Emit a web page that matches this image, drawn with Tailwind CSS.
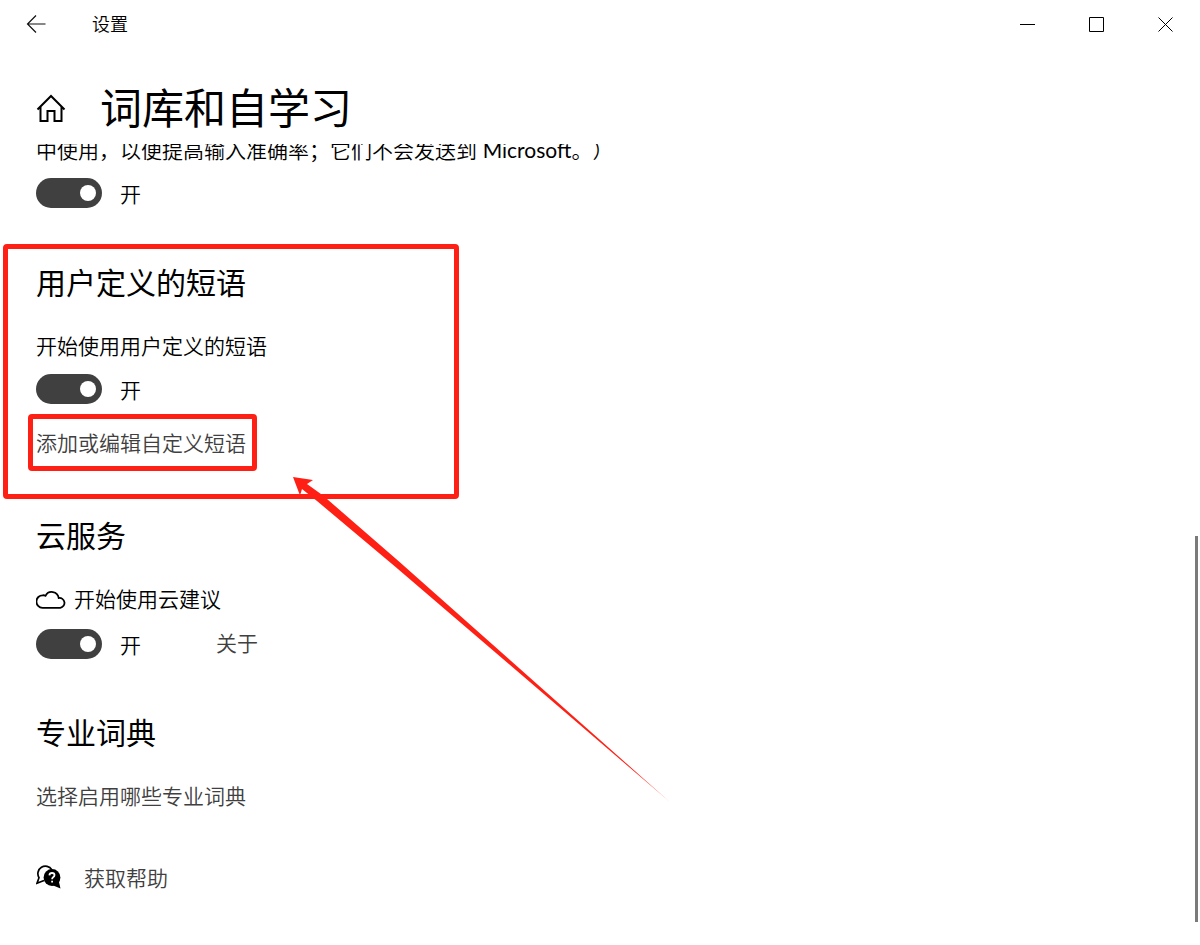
<!DOCTYPE html>
<html lang="zh-CN">
<head>
  <meta charset="UTF-8">
  <meta name="viewport" content="width=device-width, initial-scale=1.0">
  <title>设置</title>

  <!-- Tailwind CSS -->
  <script src="https://cdn.jsdelivr.net/npm/@tailwindcss/browser@4"></script>
</head>

<body class="h-screen flex flex-col overflow-hidden bg-white text-black font-[350] font-['Lato','Noto_Sans_CJK_SC',sans-serif] [text-spacing-trim:space-all]">

  <!-- Title bar -->
  <div class="flex items-center h-12 shrink-0">
    <button class="w-18 h-12 flex items-center justify-center" aria-label="返回">
      <svg class="w-5 h-5" viewBox="0 0 20 20" fill="none" stroke="#111" stroke-width="1.2">
        <path d="M10 1.5 L1.5 10 L10 18.5 M1.5 10 H19.5"/>
      </svg>
    </button>
    <span class="ml-5 text-lg leading-6">设置</span>
    <div class="ml-auto flex">
      <button class="w-[69px] h-12 flex items-center justify-center" aria-label="最小化">
        <svg class="w-4 h-4" viewBox="0 0 16 16" stroke="#000"><path d="M0 8.5 H15"/></svg>
      </button>
      <button class="w-[69px] h-12 flex items-center justify-center" aria-label="最大化">
        <svg class="w-4 h-4" viewBox="0 0 16 16" fill="none" stroke="#000"><path d="M0.5 1.5 H14.5 V15.5 H0.5 Z"/></svg>
      </button>
      <button class="w-[69px] h-12 flex items-center justify-center" aria-label="关闭">
        <svg class="w-4 h-4" viewBox="0 0 16 16" fill="none" stroke="#000"><path d="M0.5 1.5 L14.5 15.5 M14.5 1.5 L0.5 15.5"/></svg>
      </button>
    </div>
  </div>

  <!-- Page heading -->
  <header class="flex items-center h-24 shrink-0 pl-9 pt-6">
    <a href="#" class="w-16" aria-label="主页">
      <svg class="w-8 h-8" viewBox="0 0 32 32" fill="none" stroke="#000" stroke-width="2">
        <path d="M1.500 17.500 L15 4 L28.500 17.500 M4.500 15 V29 H11.500 V19 H18.500 V29 H25.500 V15"/>
      </svg>
    </a>
    <h1 class="text-[42px] leading-14 font-normal">词库和自学习</h1>
  </header>

  <!-- Scrolled content -->
  <main class="relative flex-1 overflow-hidden px-9 text-[21px] leading-7">

    <section class="-mt-2">
      <p>中使用，以便提高输入准确率；它们不会发送到 <span class="font-normal">Microsoft</span>。）</p>
      <label class="mt-3.5 flex items-center w-fit">
        <input type="checkbox" role="switch" checked class="peer sr-only">
        <span class="flex items-center justify-end w-[66px] h-[30px] pr-1.5 rounded-full bg-[#404040]"><span class="w-4 h-4 rounded-full bg-white"></span></span>
        <span class="ml-[18px] pt-0.5">开</span>
      </label>
    </section>

    <!-- User defined phrases -->
    <section class="relative mt-[54px]">
      <div class="absolute -top-[18px] -left-[33px] w-[456px] -bottom-[42px] border-5 border-[#ff2015] rounded-sm pointer-events-none"></div>
      <h2 class="text-3xl leading-10 font-normal">用户定义的短语</h2>
      <p class="mt-[30px]">开始使用用户定义的短语</p>
      <label class="mt-3.5 flex items-center w-fit">
        <input type="checkbox" role="switch" checked class="peer sr-only">
        <span class="flex items-center justify-end w-[66px] h-[30px] pr-1.5 rounded-full bg-[#404040]"><span class="w-4 h-4 rounded-full bg-white"></span></span>
        <span class="ml-[18px] pt-0.5">开</span>
      </label>
      <a href="#" class="relative block w-fit mt-[25px] text-[#404040]">
        添加或编辑自定义短语
        <span class="absolute -top-[15px] -bottom-[14px] -left-2 -right-[11px] border-5 border-[#ff2015] rounded-sm pointer-events-none"></span>
      </a>
    </section>

    <!-- Cloud service -->
    <section class="mt-[58px]">
      <h2 class="text-3xl leading-10 font-normal">云服务</h2>
      <p class="mt-[30px] flex items-center gap-2">
        <svg class="w-[30px] h-5" viewBox="0 0 30 20" fill="none" stroke="#000" stroke-width="1.8">
          <path d="M6.500 18.800 A5.700 5.700 0 0 1 6.800 6.300 Q8.300 6.100 9.500 6.800 A7 7 0 0 1 22.700 9 A4.900 4.900 0 0 1 24.300 18.800 Z"/>
        </svg>
        开始使用云建议
      </p>
      <div class="mt-4 flex items-start">
        <label class="flex items-center w-45">
          <input type="checkbox" role="switch" checked class="peer sr-only">
          <span class="flex items-center justify-end w-[66px] h-[30px] pr-1.5 rounded-full bg-[#404040]"><span class="w-4 h-4 rounded-full bg-white"></span></span>
          <span class="ml-[18px] pt-0.5">开</span>
        </label>
        <a href="#" class="text-[#404040]">关于</a>
      </div>
    </section>

    <!-- Dictionaries -->
    <section class="mt-[53px]">
      <h2 class="text-3xl leading-10 font-normal">专业词典</h2>
      <a href="#" class="block w-fit mt-[30px] text-[#404040]">选择启用哪些专业词典</a>
    </section>

    <!-- Help -->
    <a href="#" class="flex items-center gap-5 w-fit mt-[54px] text-[#404040]">
      <svg class="w-7 h-7" viewBox="0 0 28 28">
        <path d="M8 16.500 L1 19.300 L3 13.700 A7.500 7.500 0 1 1 15.800 5.800" fill="none" stroke="#000" stroke-width="1.700"/>
        <circle cx="16" cy="13.500" r="8.400" fill="#000"/>
        <path d="M16 21 L24.500 24.500 L22.500 16 Z" fill="#000"/>
        <path d="M13.400 11.300 Q13.600 9 16 9 Q18.500 9 18.500 11 Q18.500 12.300 17.100 13.200 Q16.100 13.900 16.100 15.200 M16.100 16.700 V18.500" fill="none" stroke="#fff" stroke-width="1.800"/>
      </svg>
      获取帮助
    </a>

    <!-- Arrow pointing at the phrase link -->
    <svg class="absolute top-[333px] left-[293px] w-[378px] h-[326px] pointer-events-none" viewBox="0 0 378 326">
      <defs>
        <linearGradient id="tail" gradientUnits="userSpaceOnUse" x1="0" y1="0" x2="378" y2="326">
          <stop offset="0.900" stop-color="#ff2015"/>
          <stop offset="1" stop-color="#ff2015" stop-opacity="0.400"/>
        </linearGradient>
      </defs>
      <path d="M0 0 L20 3 L14 7 L30 18.500 L106 84.500 L378 326 L102 89.500 L24 24 L9 12 L7 18.500 Z" fill="url(#tail)"/>
    </svg>

    <!-- Scrollbar thumb -->
    <div class="absolute top-[392px] right-0.5 bottom-[23px] w-[3px] bg-[#7a7a7a]"></div>
  </main>

</body>
</html>
